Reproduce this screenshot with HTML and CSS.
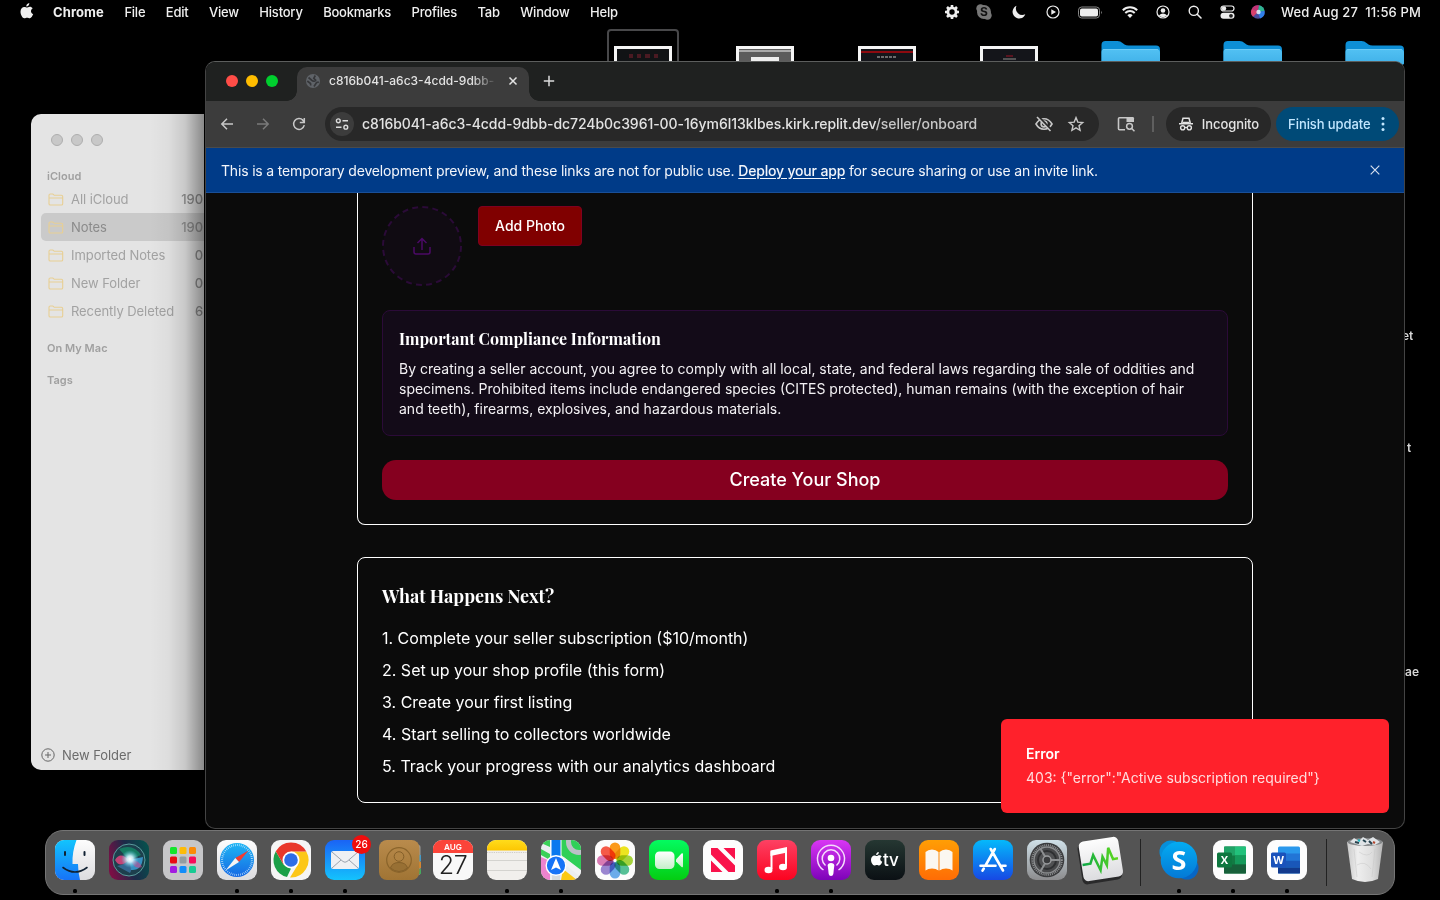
FILE: index.html
```html
<!DOCTYPE html>
<html lang="en">
<head>
<meta charset="utf-8">
<title>Desktop</title>
<link rel="stylesheet" href="styles.css">
</head>
<body>
<div class="desktop">

  <!-- shared gradients -->
  <svg class="defs" width="0" height="0" aria-hidden="true">
    <defs>
      <linearGradient id="gFold" x2="0" y2="1"><stop offset="0" stop-color="#52c1f3"/><stop offset="1" stop-color="#3fb0e8"/></linearGradient>
      <linearGradient id="gWhite" x2="0" y2="1"><stop offset="0" stop-color="#fdfdfd"/><stop offset="1" stop-color="#dcdcdf"/></linearGradient>
      <linearGradient id="gFinder" x2="0" y2="1"><stop offset="0" stop-color="#12c4fd"/><stop offset="1" stop-color="#1673f8"/></linearGradient>
      <linearGradient id="gSiri" x1="0" y1="0.6" x2="1" y2="0.3"><stop offset="0" stop-color="#7a0f45"/><stop offset=".5" stop-color="#1c2a48"/><stop offset="1" stop-color="#07504d"/></linearGradient>
      <linearGradient id="gSaf" x2="0" y2="1"><stop offset="0" stop-color="#1fb6f4"/><stop offset="1" stop-color="#1568e4"/></linearGradient>
      <linearGradient id="gMail" x2="0" y2="1"><stop offset="0" stop-color="#1a63f5"/><stop offset="1" stop-color="#14c3fd"/></linearGradient>
      <linearGradient id="gBrown" x2="0" y2="1"><stop offset="0" stop-color="#b98b4c"/><stop offset="1" stop-color="#a07434"/></linearGradient>
      <linearGradient id="gYel" x2="0" y2="1"><stop offset="0" stop-color="#ffdc1c"/><stop offset="1" stop-color="#fcc602"/></linearGradient>
      <linearGradient id="gGreen" x2="0" y2="1"><stop offset="0" stop-color="#04fb60"/><stop offset="1" stop-color="#04cd12"/></linearGradient>
      <linearGradient id="gCam" x2="0" y2="1"><stop offset="0" stop-color="#fff"/><stop offset="1" stop-color="#c4efc9"/></linearGradient>
      <linearGradient id="gMusic" x2="0" y2="1"><stop offset="0" stop-color="#fd4163"/><stop offset="1" stop-color="#fb0320"/></linearGradient>
      <linearGradient id="gPod" x2="0" y2="1"><stop offset="0" stop-color="#d936f4"/><stop offset="1" stop-color="#7d03b8"/></linearGradient>
      <linearGradient id="gTv" x2="0" y2="1"><stop offset="0" stop-color="#253732"/><stop offset="1" stop-color="#0b1014"/></linearGradient>
      <linearGradient id="gBooks" x2="0" y2="1"><stop offset="0" stop-color="#ff9e05"/><stop offset="1" stop-color="#ff6c05"/></linearGradient>
      <linearGradient id="gStore" x2="0" y2="1"><stop offset="0" stop-color="#04b9fb"/><stop offset="1" stop-color="#1748e4"/></linearGradient>
      <linearGradient id="gSet" x2="0" y2="1"><stop offset="0" stop-color="#cfe0e8"/><stop offset="1" stop-color="#8c8c8e"/></linearGradient>
      <linearGradient id="gWave" gradientUnits="userSpaceOnUse" x1="0" y1="0" x2="40" y2="0"><stop offset="0" stop-color="#0aa548"/><stop offset="1" stop-color="#65dd1a"/></linearGradient>
      <linearGradient id="gSky" x2="0" y2="1"><stop offset="0" stop-color="#04acf2"/><stop offset="1" stop-color="#0479d6"/></linearGradient>
      <linearGradient id="gTrash" x2="1" y2="0"><stop offset="0" stop-color="#c9c9c9"/><stop offset=".3" stop-color="#eeeeee"/><stop offset=".7" stop-color="#dddddd"/><stop offset="1" stop-color="#b5b5b5"/></linearGradient>
      <radialGradient id="gGlow"><stop offset="0" stop-color="#fff"/><stop offset=".35" stop-color="#d5f6ff" stop-opacity=".9"/><stop offset="1" stop-color="#48c0e0" stop-opacity="0"/></radialGradient>
      <clipPath id="tile"><rect width="40" height="40" rx="9"/></clipPath>
      <symbol id="folder" viewBox="0 0 60 26"><path d="M.5 5q0-4 4-4h12q3 0 5 2l2 1.500q1.500 1 4 1H55q4 0 4 4V24H.5z" fill="#0d8fd6"/><path d="M.5 12q0-3 3-3H55q4 0 4 4v10l-1 2H.5z" fill="url(#gFold)"/><path d="M2 9.500h55" stroke="#82d4f8" stroke-width=".6"/></symbol>
      <symbol id="nfolder" viewBox="0 0 16 13"><path d="M1 10.700V2.300Q1 1 2.300 1h2.500l1.500 1.300h7Q14.700 2.300 14.700 3.600v7.100Q14.700 12 13.400 12H2.300Q1 12 1 10.700zM1 5h13.700" fill="none" stroke="#e8cf94" stroke-width="1.100"/></symbol>
      <symbol id="apple" viewBox="0 0 14 17"><path d="M9.300 0c.2 1.900-1.300 3.600-3 3.500C6.100 1.800 7.500.2 9.300 0zM6.800 4.600c.7 0 1.700-.9 3-.9 1.100 0 2.200.6 2.900 1.500-2.500 1.500-2.100 4.900.5 5.900-.6 1.700-1.900 4.200-3.400 4.200-1 0-1.500-.6-2.700-.6s-1.700.6-2.700.6C2.400 15.300.5 11.700.5 8.800c0-3 1.900-4.900 3.800-4.900 1.100 0 2 .7 2.500.7z" fill="currentColor"/></symbol>
    </defs>
  </svg>

  <header class="menubar">
    <svg class="apple" width="14" height="17"><use href="#apple"/></svg>
    <nav class="menus">
      <b>Chrome</b><span>File</span><span>Edit</span><span>View</span><span>History</span><span>Bookmarks</span><span>Profiles</span><span>Tab</span><span>Window</span><span>Help</span>
    </nav>
    <div class="status">
      <span class="w32"><svg width="16" height="16" viewBox="-8 -8 16 16"><circle r="4.100" fill="none" stroke="#eee" stroke-width="2.800"/><path d="M0-7V-5M0 7V5M7 0H5M-7 0H-5M5-5L3.500-3.500M-5-5L-3.500-3.500M5 5L3.500 3.500M-5 5L-3.500 3.500" stroke="#eee" stroke-width="2.600"/></svg></span>
      <span class="w32"><svg width="16" height="16" viewBox="0 0 16 16"><circle cx="8" cy="8" r="7" fill="#777"/><circle cx="4.500" cy="4.500" r="4.200" fill="#777"/><circle cx="11.500" cy="11.500" r="4.200" fill="#777"/><text x="8" y="12.200" text-anchor="middle" font-size="12" font-weight="700" fill="#111">S</text></svg></span>
      <span class="w38"><svg width="14" height="14" viewBox="0 0 14 14"><path d="M4.500.8A6.600 6.600 0 1 0 13.300 9.300 6.500 6.500 0 0 1 4.500.8z" fill="#eee"/></svg></span>
      <span class="w30"><svg width="14" height="14" viewBox="0 0 14 14"><circle cx="7" cy="7" r="6" fill="none" stroke="#eee" stroke-width="1.200"/><path d="M5.300 4.200v5.600L10 7z" fill="#eee"/></svg></span>
      <span class="w44"><svg width="26" height="13" viewBox="0 0 26 13"><rect x="1.500" y="1" width="21" height="11" rx="3.200" fill="none" stroke="#888" stroke-width="1"/><rect x="3" y="2.500" width="18" height="8" rx="1.800" fill="#eee"/><path d="M24 4.800q1.600 1.700 0 3.400z" fill="#999"/></svg></span>
      <span class="w36"><svg width="18" height="14" viewBox="0 0 18 14"><path d="M1.800 5.200a10.300 10.300 0 0 1 14.400 0M4.300 8a6.800 6.800 0 0 1 9.400 0" fill="none" stroke="#eee" stroke-width="2"/><path d="M6.400 10.300a3.800 3.800 0 0 1 5.200 0L9 13z" fill="#eee"/></svg></span>
      <span class="w30"><svg width="14" height="14" viewBox="0 0 14 14"><circle cx="7" cy="7" r="6" fill="none" stroke="#eee" stroke-width="1.200"/><circle cx="7" cy="5.500" r="2.300" fill="#eee"/><path d="M2.800 10.600q4.200-4.300 8.400 0Q7 14 2.800 10.600z" fill="#eee"/></svg></span>
      <span class="w34"><svg width="14" height="14" viewBox="0 0 14 14"><circle cx="5.800" cy="5.800" r="4.600" fill="none" stroke="#eee" stroke-width="1.400"/><path d="M9.200 9.200l3.800 3.800" stroke="#eee" stroke-width="1.600" stroke-linecap="round"/></svg></span>
      <span class="w30"><svg width="15" height="14" viewBox="0 0 15 14"><rect x="1" y="1" width="13" height="5" rx="2.500" fill="none" stroke="#eee" stroke-width="1.200"/><circle cx="4" cy="3.500" r="2.200" fill="#eee"/><rect x=".5" y="7.800" width="14" height="6" rx="3" fill="#eee"/><circle cx="11" cy="10.800" r="1.900" fill="#222"/></svg></span>
      <span class="w32"><svg width="14" height="14" viewBox="0 0 14 14"><circle cx="7" cy="7" r="6.800" fill="#4b4a9c"/><path d="M7 7L1 3.500A7 7 0 0 1 8 .3z" fill="#c43374"/><path d="M7 7L8 .3A7 7 0 0 1 13.500 6z" fill="#2fb58f"/><path d="M7 7l6.500-1A7 7 0 0 1 9 13.500z" fill="#2f7fe8"/><path d="M7 7L1 3.500A7 7 0 0 0 2 11.800z" fill="#d83f6c"/><circle cx="7.500" cy="7" r="2.200" fill="#e6f5ff" opacity=".85"/></svg></span>
    </div>
    <span class="clock">Wed Aug 27&nbsp; 11:56 PM</span>
  </header>

  <!-- desktop items behind the windows -->
  <div class="pick"></div>
  <svg class="thumb t1" width="58" height="18"><rect width="58" height="18" fill="#f5f5f5"/><rect x="3" y="3" width="52" height="15" fill="#111315"/><path d="M15 10h4M23 10h4M31 10h5M40 10h4" stroke="#4a1a22" stroke-width="4"/></svg>
  <svg class="thumb t2" width="58" height="18"><rect width="58" height="18" fill="#f5f5f5"/><rect x="3" y="3" width="52" height="15" fill="#5c5c5c"/><path d="M3 5h52" stroke="#aaa" stroke-width="2"/><rect x="15" y="11" width="28" height="7" fill="#eee"/></svg>
  <svg class="thumb t3" width="58" height="18"><rect width="58" height="18" fill="#f5f5f5"/><rect x="3" y="3" width="52" height="15" fill="#14151a"/><path d="M3 6h52" stroke="#8d0a10" stroke-width="2"/><path d="M19 11h20" stroke="#888" stroke-width="1.500" stroke-dasharray="3 1"/></svg>
  <svg class="thumb t4" width="58" height="18"><rect width="58" height="18" fill="#f5f5f5"/><rect x="3" y="3" width="52" height="15" fill="#14151a"/><path d="M26 10h7" stroke="#701522" stroke-width="1.500"/><path d="M23 13h13" stroke="#666" stroke-width="1.500"/></svg>
  <svg class="dfolder f1" width="60" height="26"><use href="#folder"/></svg>
  <svg class="dfolder f2" width="60" height="26"><use href="#folder"/></svg>
  <svg class="dfolder f3" width="60" height="26"><use href="#folder"/></svg>
  <span class="lbl l1">et</span><span class="lbl l2">t</span><span class="lbl l3">ae</span>

  <aside class="notes">
    <div class="dots"><i></i><i></i><i></i></div>
    <div class="nhead">iCloud</div>
    <div class="nrow"><svg width="16" height="13"><use href="#nfolder"/></svg><span>All iCloud</span><em>190</em></div>
    <div class="nrow sel"><svg width="16" height="13"><use href="#nfolder"/></svg><span>Notes</span><em>190</em></div>
    <div class="nrow"><svg width="16" height="13"><use href="#nfolder"/></svg><span>Imported Notes</span><em>0</em></div>
    <div class="nrow"><svg width="16" height="13"><use href="#nfolder"/></svg><span>New Folder</span><em>0</em></div>
    <div class="nrow"><svg width="16" height="13"><use href="#nfolder"/></svg><span>Recently Deleted</span><em>6</em></div>
    <div class="nhead mac">On My Mac</div>
    <div class="nhead tags">Tags</div>
    <div class="nfoot"><svg width="14" height="14" viewBox="0 0 14 14"><circle cx="7" cy="7" r="6.200" fill="none" stroke="#666"/><path d="M7 4v6M4 7h6" stroke="#666"/></svg><span>New Folder</span></div>
  </aside>

  <main class="chrome">
    <div class="tabstrip">
      <div class="lights"><i class="r"></i><i class="y"></i><i class="g"></i></div>
      <div class="tab">
        <svg width="14" height="14" viewBox="0 0 14 14"><circle cx="7" cy="7" r="7" fill="#5f6368"/><path d="M1.300 7L4.500 9.500l.2 2M2.500 3.500L6 6.500q2.800 1.600 3.700-.3L7.800 4.300 9.300 1.500M8 12.500l2.600-4 2.200-.4" fill="none" stroke="#36373a" stroke-width="1.700"/></svg>
        <span class="ttl">c816b041-a6c3-4cdd-9dbb-</span>
        <svg class="tx" width="10" height="10" viewBox="0 0 10 10"><path d="M1.500 1.500l7 7M8.500 1.500l-7 7" stroke="#e3e3e3" stroke-width="1.500"/></svg>
      </div>
      <svg class="plus" width="12" height="12" viewBox="0 0 12 12"><path d="M6 .8v10.400M.8 6h10.400" stroke="#dcdcdc" stroke-width="1.500"/></svg>
    </div>
    <div class="toolbar">
      <span class="nav"><svg width="14" height="14" viewBox="0 0 14 14"><path d="M13 7H2M7 1.800L1.800 7 7 12.200" fill="none" stroke="#c7c7c7" stroke-width="1.500"/></svg></span>
      <span class="nav"><svg width="14" height="14" viewBox="0 0 14 14"><path d="M1 7h11M7 1.800L12.200 7 7 12.200" fill="none" stroke="#7a7a7a" stroke-width="1.500"/></svg></span>
      <span class="nav"><svg width="14" height="14" viewBox="0 0 14 14"><path d="M12.300 8.200A5.400 5.400 0 1 1 11 3.300M12.300 1v4.500H7.800M12.300 5L10 2.400" fill="none" stroke="#c7c7c7" stroke-width="1.500"/></svg></span>
      <div class="omni">
        <span class="site"><svg width="14" height="12" viewBox="0 0 14 12"><circle cx="3.300" cy="2.800" r="1.900" fill="none" stroke="#ddd" stroke-width="1.400"/><path d="M7.500 2.800H13M1 9.200h5.500" stroke="#ddd" stroke-width="1.500"/><circle cx="10.800" cy="9.200" r="1.900" fill="none" stroke="#ddd" stroke-width="1.400"/></svg></span>
        <span class="url">c816b041-a6c3-4cdd-9dbb-dc724b0c3961-00-16ym6l13klbes.kirk.replit.dev<s>/seller/onboard</s></span>
        <svg class="eye" width="18" height="16" viewBox="0 0 18 16"><path d="M1 8q3-5.300 8-5.300T17 8q-3 5.300-8 5.300T1 8z" fill="none" stroke="#c7c7c7" stroke-width="1.600"/><circle cx="9" cy="8" r="2.900" fill="none" stroke="#c7c7c7" stroke-width="1.600"/><path d="M3.500.8l13.500 13.700" stroke="#282828" stroke-width="2.200"/><path d="M2 1l13.500 14" stroke="#c7c7c7" stroke-width="1.600"/></svg>
        <svg class="star" width="16" height="16" viewBox="0 0 16 16"><path d="M8 1.600l1.800 4.500 4.900.4-3.700 3.200 1.100 4.700L8 11.900l-4.100 2.500L5 9.700 1.300 6.500l4.900-.4z" fill="none" stroke="#c7c7c7" stroke-width="1.400"/></svg>
      </div>
      <svg class="lens" width="18" height="16" viewBox="0 0 18 16"><path d="M8 13.800H2.500q-1 0-1-1V2.700q0-1 1-1H10" fill="none" stroke="#c7c7c7" stroke-width="1.600"/><path d="M9.500 1h6.200q1.300 0 1.300 1.300V6H9.500z" fill="#c7c7c7"/><circle cx="12.500" cy="10.300" r="2.900" fill="none" stroke="#c7c7c7" stroke-width="1.500"/><path d="M14.500 12.300l3 3" stroke="#c7c7c7" stroke-width="1.500"/></svg>
      <i class="bar"></i>
      <div class="pill"><svg width="16" height="16" viewBox="0 0 16 16"><path d="M1 7.700h14M3.700 7L5 2.300h6L12.300 7" fill="none" stroke="#e3e3e3" stroke-width="1.500"/><path d="M4.500 5.800h7v2h-7z" fill="#e3e3e3"/><circle cx="4.700" cy="11.800" r="2.100" fill="none" stroke="#e3e3e3" stroke-width="1.400"/><circle cx="11.300" cy="11.800" r="2.100" fill="none" stroke="#e3e3e3" stroke-width="1.400"/><path d="M6.800 11.500h2.400" stroke="#e3e3e3" stroke-width="1.200"/></svg><span>Incognito</span></div>
      <div class="pill upd"><span>Finish update</span><svg width="4" height="16" viewBox="0 0 4 16"><circle cx="2" cy="2.500" r="1.500" fill="#c2e7ff"/><circle cx="2" cy="8" r="1.500" fill="#c2e7ff"/><circle cx="2" cy="13.500" r="1.500" fill="#c2e7ff"/></svg></div>
    </div>
    <div class="banner">
      <span>This is a temporary development preview, and these links are not for public use. <u>Deploy your app</u> for secure sharing or use an invite link.</span>
      <svg width="10" height="10" viewBox="0 0 10 10"><path d="M.7.7l8.600 8.600M9.300.7L.7 9.300" stroke="#d4deee" stroke-width="1.200"/></svg>
    </div>
    <div class="page">
      <section class="card first">
        <div class="photo">
          <svg width="80" height="80" viewBox="0 0 80 80"><circle cx="40" cy="40" r="39" fill="#100b12" stroke="#2b0b38" stroke-width="2" stroke-dasharray="6 4.210"/><path d="M32 41v5q0 2 2 2h12q2 0 2-2v-5M35.500 37L40 32.500l4.500 4.500M40 33v11" fill="none" stroke="#4b0a66" stroke-width="1.500"/></svg>
          <button class="add">Add Photo</button>
        </div>
        <div class="info">
          <h3>Important Compliance Information</h3>
          <p>By creating a seller account, you agree to comply with all local, state, and federal laws regarding the sale of oddities and<br>specimens. Prohibited items include endangered species (CITES protected), human remains (with the exception of hair<br>and teeth), firearms, explosives, and hazardous materials.</p>
        </div>
        <button class="create">Create Your Shop</button>
      </section>
      <section class="card next">
        <h2>What Happens Next?</h2>
        <div class="steps">
          <p>1. Complete your seller subscription ($10/month)</p>
          <p>2. Set up your shop profile (this form)</p>
          <p>3. Create your first listing</p>
          <p>4. Start selling to collectors worldwide</p>
          <p>5. Track your progress with our analytics dashboard</p>
        </div>
      </section>
    </div>
    <div class="toast"><b>Error</b><span>403: {"error":"Active subscription required"}</span></div>
  </main>

  <footer class="dock">
    <div class="app on"><svg viewBox="0 0 40 40"><g clip-path="url(#tile)"><rect width="40" height="40" fill="url(#gWhite)"/><path d="M0 0h21.500Q17 12 17.500 24H23q0 8 2 16H0z" fill="url(#gFinder)"/></g><path d="M10 12v3M29.500 12v3" stroke="#123" stroke-width="2" stroke-linecap="round"/><path d="M8 27.500q12 9 24 0" fill="none" stroke="#123" stroke-width="1.600" stroke-linecap="round"/></svg></div>
    <div class="app"><svg viewBox="0 0 40 40"><rect width="40" height="40" rx="9" fill="url(#gSiri)"/><circle cx="20" cy="20" r="16" fill="#1d3f4d" stroke="#5a9c9c"/><path d="M6 20q5-9 14 0-9 9-14 0z" fill="#e0447e" opacity=".85"/><path d="M10 9q14-6 22 6l-12 5z" fill="#148a68" opacity=".8"/><path d="M20 20l14-3q-1 14-12 13z" fill="#3fa5df" opacity=".8"/><path d="M8 26q9-2 12-6 4 9 1 13z" fill="#3f7aae" opacity=".7"/><path d="M22 20q8 0 11 7-8 3-11-7z" fill="#c84a90" opacity=".6"/><circle cx="21" cy="19" r="9" fill="url(#gGlow)"/></svg></div>
    <div class="app"><svg viewBox="0 0 40 40"><rect width="40" height="40" rx="9" fill="#c6c6c8"/><g><rect x="7" y="7" width="7" height="7" rx="1.500" fill="#13e52b"/><rect x="16.500" y="7" width="7" height="7" rx="1.500" fill="#fdbb08"/><rect x="26" y="7" width="7" height="7" rx="1.500" fill="#fb8a07"/><rect x="7" y="16.500" width="7" height="7" rx="1.500" fill="#e90b13"/><rect x="16.500" y="16.500" width="7" height="7" rx="1.500" fill="#939da1"/><rect x="26" y="16.500" width="7" height="7" rx="1.500" fill="#f70b5a"/><rect x="7" y="26" width="7" height="7" rx="1.500" fill="#a21be0"/><rect x="16.500" y="26" width="7" height="7" rx="1.500" fill="#128df9"/><rect x="26" y="26" width="7" height="7" rx="1.500" fill="#17cb93"/></g></svg></div>
    <div class="app on"><svg viewBox="0 0 40 40"><rect width="40" height="40" rx="9" fill="url(#gWhite)"/><circle cx="20" cy="20" r="17" fill="url(#gSaf)"/><circle cx="20" cy="20" r="14.900" fill="none" stroke="#d6efff" stroke-width="2" stroke-dasharray=".6 1.340"/><path d="M31.500 10.500L22 22 18.300 18z" fill="#f33b30"/><path d="M8.500 30.500L18.300 18l3.700 4z" fill="#f4f4f4"/></svg></div>
    <div class="app on"><svg viewBox="0 0 40 40"><rect width="40" height="40" rx="9" fill="#f5f5f5"/><path d="M4.800 11.300L12.500 24.500 20 28.500l-4 8.600A17.500 17.500 0 0 1 4.800 11.300z" fill="#1ba048"/><path d="M20 11.500h15.300A17.500 17.500 0 0 1 19 37.500l8-13z" fill="#fcc718"/><path d="M4.800 11.300A17.500 17.500 0 0 1 35.300 11.500H20L12.500 24.500z" fill="#e9382b"/><circle cx="20" cy="20" r="8.500" fill="#fff"/><circle cx="20" cy="20" r="6.800" fill="#2e6de6"/></svg></div>
    <div class="app on"><svg viewBox="0 0 40 40"><rect width="40" height="40" rx="9" fill="url(#gMail)"/><rect x="6" y="11" width="28" height="18" rx="2.500" fill="#eef0f3"/><path d="M7 12l11 9.500q2 1.500 4 0L33 12M7 28l9-8M33 28l-9-8" fill="none" stroke="#9aa3ae" stroke-width="1"/></svg><span class="badge">26</span></div>
    <div class="app"><svg viewBox="0 0 40 40"><path d="M37 5h2.500q2 0 2 2v26q0 2-2 2H37z" fill="#9a9a98"/><path d="M40 15h1.800v6H40z" fill="#38a4dc"/><path d="M40 22h1.800v6H40z" fill="#ec8b20"/><path d="M40 29h1.800v5H40z" fill="#3cb559"/><rect width="40.500" height="40" rx="8" fill="url(#gBrown)"/><circle cx="20" cy="20" r="12.300" fill="none" stroke="#8a642b" stroke-width="1.200"/><circle cx="20" cy="16.500" r="4.800" fill="#b08343" stroke="#845f29"/><path d="M11.500 28Q13 22.500 20 22.500T28.500 28Q20 35 11.500 28z" fill="#987034" stroke="#845f29"/></svg></div>
    <div class="app"><svg viewBox="0 0 40 40"><g clip-path="url(#tile)"><rect width="40" height="40" fill="#f8f8f8"/><rect width="40" height="13" fill="#fb4439"/></g><text x="20" y="9.800" text-anchor="middle" font-size="8.200" font-weight="600" fill="#fff">AUG</text><text x="20" y="34.300" text-anchor="middle" font-size="25" font-weight="300" letter-spacing="-.4" fill="#222">27</text></svg></div>
    <div class="app on"><svg viewBox="0 0 40 40"><g clip-path="url(#tile)"><rect width="40" height="40" fill="#f1efec"/><rect width="40" height="10.500" fill="url(#gYel)"/><path d="M0 12.500h40" stroke="#b4b2ae" stroke-width=".7" stroke-dasharray=".8 1"/><path d="M0 20.500h40M0 30.500h40" stroke="#cdcbc8" stroke-width=".8"/></g></svg></div>
    <div class="app on"><svg viewBox="0 0 40 40"><g clip-path="url(#tile)"><rect width="40" height="40" fill="#eceef0"/><path d="M20 0h20v30L20 15z" fill="#2fd058"/><path d="M0 9l9 5v6L0 15zM0 0h9v7L0 3z" fill="#3bd158"/><path d="M0 17l9 4v19H0z" fill="#ee83cf"/><path d="M22 29l14 11H20z" fill="#fcc914"/><path d="M21 19l19 15" stroke="#f2f3f4" stroke-width="5"/><circle cx="38" cy="2" r="10.500" fill="none" stroke="#bbc0c7" stroke-width="5"/><path d="M15 0v20" stroke="#fff" stroke-width="11"/><path d="M15 0v20" stroke="#0a78ef" stroke-width="9"/><path d="M15 30v10" stroke="#d5dade" stroke-width="8"/></g><circle cx="15" cy="25.500" r="9.800" fill="#1673f7" stroke="#fff" stroke-width="1.400"/><path d="M15 18l5 12-5-2.600L10 30z" fill="#fff"/></svg></div>
    <div class="app"><svg viewBox="0 0 40 40"><rect width="40" height="40" rx="9" fill="#fcfcfc"/><g class="petals" transform="translate(20 20.500)"><rect x="-5.300" y="-18" width="10.600" height="16.500" rx="5.300" fill="#fb9a1c"/><rect x="-5.300" y="-18" width="10.600" height="16.500" rx="5.300" fill="#ece420" transform="rotate(45)"/><rect x="-5.300" y="-18" width="10.600" height="16.500" rx="5.300" fill="#a5d33c" transform="rotate(90)"/><rect x="-5.300" y="-18" width="10.600" height="16.500" rx="5.300" fill="#56c096" transform="rotate(135)"/><rect x="-5.300" y="-18" width="10.600" height="16.500" rx="5.300" fill="#6bacea" transform="rotate(180)"/><rect x="-5.300" y="-18" width="10.600" height="16.500" rx="5.300" fill="#9a86d0" transform="rotate(225)"/><rect x="-5.300" y="-18" width="10.600" height="16.500" rx="5.300" fill="#d97bb4" transform="rotate(270)"/><rect x="-5.300" y="-18" width="10.600" height="16.500" rx="5.300" fill="#f55a48" transform="rotate(315)"/></g></svg></div>
    <div class="app"><svg viewBox="0 0 40 40"><rect width="40" height="40" rx="9" fill="url(#gGreen)"/><rect x="6" y="11.500" width="19.500" height="17.500" rx="4.500" fill="url(#gCam)"/><path d="M27 19.500l5.500-6q1.500-1 1.500.8v12q0 1.700-1.500.7L27 21.500z" fill="url(#gCam)"/></svg></div>
    <div class="app"><svg viewBox="0 0 40 40"><rect width="40" height="40" rx="9" fill="#fdfdfd"/><path d="M8 8h6.500L32 25.500V32h-6.500L8 14.500zM20.500 8H32v11.500zM8 20.500L19.500 32H8z" fill="#f9124b"/></svg></div>
    <div class="app on"><svg viewBox="0 0 40 40"><rect width="40" height="40" rx="9" fill="url(#gMusic)"/><path d="M14.500 29V12L29 9v17" fill="none" stroke="#fff" stroke-width="2"/><path d="M13.500 10.500L30 7v5.500L13.500 16z" fill="#fff"/><ellipse cx="11.500" cy="30" rx="4" ry="3.300" fill="#fff"/><ellipse cx="26" cy="27" rx="4" ry="3.300" fill="#fff"/></svg></div>
    <div class="app on"><svg viewBox="0 0 40 40"><rect width="40" height="40" rx="9" fill="url(#gPod)"/><path d="M12.500 30A13.500 13.500 0 1 1 27.500 30M14.500 25.500A8.800 8.800 0 1 1 25.500 25.500" fill="none" stroke="#f5dcfb" stroke-width="1.500"/><circle cx="20" cy="18" r="3.300" fill="#fff"/><path d="M16.700 25.500q0-2.500 3.300-2.500t3.300 2.500l-1 8.500q-.3 2-2.300 2t-2.300-2z" fill="#fff"/></svg></div>
    <div class="app"><svg viewBox="0 0 40 40"><rect width="40" height="40" rx="9" fill="url(#gTv)"/><svg x="5.500" y="12" width="12.500" height="15" color="#fff"><use href="#apple"/></svg><text x="18" y="26.200" font-size="17" font-weight="500" fill="#fff" letter-spacing="-.2">tv</text></svg></div>
    <div class="app"><svg viewBox="0 0 40 40"><rect width="40" height="40" rx="9" fill="url(#gBooks)"/><path d="M19.500 12Q17 9.500 13 9.500T6.500 12v18.500q2.500-2 6.500-2t6.500 2zM20.500 12Q23 9.500 27 9.500T33.500 12v18.500q-2.500-2-6.500-2t-6.500 2z" fill="#fbf7f1"/></svg></div>
    <div class="app"><svg viewBox="0 0 40 40"><rect width="40" height="40" rx="9" fill="url(#gStore)"/><path d="M21.800 9L12.500 25.500M10.800 28.500L9.500 30.700M17.700 9L30 30.500M7.500 25.700h15M27.500 25.700h5" fill="none" stroke="#fff" stroke-width="2.600" stroke-linecap="round"/></svg></div>
    <div class="app"><svg viewBox="0 0 40 40"><rect width="40" height="40" rx="9" fill="url(#gSet)"/><circle cx="20" cy="20" r="17.300" fill="#3b3c3e"/><circle cx="20" cy="20" r="14.800" fill="none" stroke="#8f9193" stroke-width="2" stroke-dasharray="1 .9"/><circle cx="20" cy="20" r="13" fill="#48494b" stroke="#8b8d8f" stroke-width="1.400"/><circle cx="20" cy="20" r="9" fill="#505153" stroke="#2e2f31" stroke-width="2"/><path d="M20 20h13M20 20l-6.500-11.200M20 20l-6.500 11.200" stroke="#8d8f91" stroke-width="2"/><circle cx="20" cy="20" r="4" fill="#3a3b3d" stroke="#999b9d" stroke-width="1.500"/></svg></div>
    <div class="app"><svg viewBox="0 0 40 40"><g transform="rotate(-9 20 20)"><rect x="-1.500" y="1" width="40" height="41" rx="5" fill="#29292a"/><rect x="0" y="-1" width="40" height="40" rx="5" fill="url(#gWhite)"/><path d="M1 22h8l4-8 5 16 4-13 3 9 4-17 3 12h5" fill="none" stroke="url(#gWave)" stroke-width="2.500"/></g></svg></div>
    <i class="sep"></i>
    <div class="app on"><svg viewBox="0 0 40 40"><circle cx="12" cy="12" r="11.500" fill="#078fda"/><circle cx="28" cy="28" r="11.500" fill="#0766c5"/><circle cx="20" cy="20" r="18.300" fill="url(#gSky)"/><text x="20" y="30" text-anchor="middle" font-size="27" font-weight="700" fill="#fff" font-family="Open Sans, sans-serif">S</text></svg></div>
    <div class="app on"><svg viewBox="0 0 40 40"><rect width="40" height="40" rx="9" fill="#fdfdfd"/><rect x="11" y="6.500" width="22" height="27" rx="1.500" fill="#127a43"/><path d="M11 6.500h11v9H11z" fill="#1fa366"/><path d="M22 6.500h11v9H22z" fill="#22c17b"/><path d="M22 15.500h11v9H22z" fill="#159a5b"/><path d="M11 24.500h22v9H11z" fill="#17603a"/><rect x="4" y="12.500" width="15" height="15" rx="1.500" fill="#0e773f"/><text x="11.500" y="24" text-anchor="middle" font-size="11" font-weight="700" fill="#fff" font-family="Open Sans, sans-serif">X</text></svg></div>
    <div class="app on"><svg viewBox="0 0 40 40"><rect width="40" height="40" rx="9" fill="#fdfdfd"/><rect x="11" y="6.500" width="22" height="27" rx="1.500" fill="#2a98ec"/><path d="M11 13.500h22v7H11z" fill="#2275d6"/><path d="M11 20.500h22v7H11z" fill="#1957b9"/><path d="M11 27.500h22v6H11z" fill="#123a8d"/><rect x="4" y="12.500" width="15" height="15" rx="1.500" fill="#1a52bb"/><text x="11.500" y="24" text-anchor="middle" font-size="11" font-weight="700" fill="#fff" font-family="Open Sans, sans-serif">W</text></svg></div>
    <i class="sep"></i>
    <div class="app"><svg viewBox="0 0 40 40"><path d="M2 2q18-6 36 0l-5 37q-13 6-26 0z" fill="url(#gTrash)"/><ellipse cx="20" cy="2" rx="17.500" ry="4" fill="#85888a"/><path d="M5 2l4-4 5 3 4-4 5 3 5-3 7 5-5 3-7-1-6 2-6-2z" fill="#dfe3e6"/><path d="M10 2l4 1M24 1l3 3M18 0l3 2" stroke="#26434f" stroke-width="2"/><path d="M13 0l2 1" stroke="#19b5c2" stroke-width="2"/><path d="M28 2l2 1" stroke="#b5462c" stroke-width="2"/><path d="M9 9l3 28M30 9l-3 28M14 12q9 6 13 0M12 25q8-5 14 4" stroke="#c4c4c4" stroke-width=".9" fill="none" opacity=".5"/></svg></div>
  </footer>
</div>
</body>
</html>
```
FILE: styles.css
```css
* { box-sizing: border-box; }
body { margin: 0; background: #000; font-family: Inter, "Liberation Sans", sans-serif; }
.desktop { position: relative; width: 1440px; height: 900px; overflow: hidden; background: #000; }
.defs { position: absolute; }
svg { flex: none; display: block; overflow: visible; }

.menubar { display: flex; align-items: center; height: 24px; padding-left: 20px; color: #efefef; font-size: 13px; font-weight: 500; white-space: nowrap; }
.apple { margin-top: -2px; }
.menus { display: flex; gap: 20.5px; margin-left: 19px; width: 883px; padding-bottom: 1px; letter-spacing: -.22px; }
.menus b { letter-spacing: .1px; }
.status { display: flex; }
.status span { display: flex; justify-content: center; align-items: center; }
.w30 { width: 30px; } .w32 { width: 32px; } .w34 { width: 34px; } .w36 { width: 36px; } .w38 { width: 38px; } .w44 { width: 44px; }
.clock { margin-left: 7px; padding-bottom: 1px; letter-spacing: .15px; }

.pick { position: absolute; left: 607px; top: 29px; width: 72px; height: 60px; border: 2px solid #48484a; border-radius: 4px; }
.thumb { position: absolute; top: 46px; }
.t1 { left: 614px; } .t2 { left: 736px; } .t3 { left: 858px; } .t4 { left: 980px; }
.dfolder { position: absolute; top: 40px; }
.f1 { left: 1101px; } .f2 { left: 1223px; } .f3 { left: 1345px; }
.lbl { position: absolute; font-size: 12px; font-weight: 600; color: #d5d5d5; line-height: 16px; }
.l1 { left: 1402px; top: 328px; } .l2 { left: 1407px; top: 440px; } .l3 { left: 1405px; top: 664px; }

.notes { position: absolute; left: 31px; top: 114px; width: 173px; height: 656px; background: #e4e4e4; border-radius: 10px 0 0 10px; overflow: hidden; display: flex; flex-direction: column; }
.notes::after { content: ""; position: absolute; inset: 0 0 0 auto; width: 54px; background: linear-gradient(90deg, transparent, rgba(0,0,0,.03) 35%, rgba(0,0,0,.12) 65%, rgba(0,0,0,.4)); }
.dots { display: flex; gap: 8px; padding: 20px 0 0 20px; height: 54px; }
.dots i { width: 12px; height: 12px; border-radius: 50%; background: #c8c8c8; border: 1px solid #aeaeae; }
.nhead { font-size: 11px; font-weight: 600; color: #a0a0a0; height: 17px; line-height: 16px; padding-left: 16px; letter-spacing: .03px; }
.mac { margin-top: 15px; } .tags { margin-top: 15px; }
.nrow { display: flex; align-items: center; height: 28px; margin-left: 10px; padding: 0 1px 0 7px; font-size: 13px; color: #a2a2a2; border-radius: 5px 0 0 5px; letter-spacing: -.07px; }
.nrow span { margin-left: 7px; flex: 1; white-space: nowrap; }
.nrow em { font-style: normal; color: #8e8e8e; font-weight: 500; }
.sel { background: #cacaca; color: #8b8b8b; }
.nfoot { display: flex; align-items: center; gap: 7px; margin-top: auto; padding: 0 0 7px 10px; font-size: 13px; color: #6b6b6b; letter-spacing: -.07px; }

.chrome { position: absolute; left: 205px; top: 61px; width: 1200px; height: 768px; border: 1px solid #444; border-top-color: #5c5e5d; border-radius: 10px; overflow: hidden; background: #0b0b0b; display: flex; flex-direction: column; }
.tabstrip { display: flex; height: 39px; background: #1f2120; flex: none; }
.lights { display: flex; gap: 8px; padding: 13px 0 0 20px; width: 91px; }
.lights i { width: 12px; height: 12px; border-radius: 50%; }
.r { background: #ff4d47; } .y { background: #ffbd00; } .g { background: #00cf2e; }
.tab { position: relative; display: flex; align-items: center; width: 232px; height: 34px; margin-top: 5px; padding: 0 11px 6px 9px; border-radius: 10px 10px 0 0; background: #3c3c3c; }
.tab::before, .tab::after { content: ""; position: absolute; bottom: 0; width: 10px; height: 10px; }
.tab::before { left: -10px; background: radial-gradient(circle at 0 0, transparent 9.5px, #3c3c3c 10px); }
.tab::after { right: -10px; background: radial-gradient(circle at 100% 0, transparent 9.5px, #3c3c3c 10px); }
.ttl { margin: -1px 0 0 9px; width: 168px; white-space: nowrap; font-size: 12px; font-weight: 500; color: #e3e3e3; -webkit-mask-image: linear-gradient(90deg, #000 85%, transparent); mask-image: linear-gradient(90deg, #000 85%, transparent); }
.tx { margin-left: 11px; }
.plus { margin: 13px 0 0 14px; }
.toolbar { display: flex; align-items: center; height: 47px; flex: none; background: #3c3c3c; border-bottom: 1px solid #4b4b4b; padding: 0 5px 0 3px; }
.nav { width: 36px; display: flex; justify-content: center; }
.omni { display: flex; align-items: center; width: 775px; height: 34px; margin-left: 8px; border-radius: 17px; background: #282828; padding: 0 15px 0 5px; }
.site { width: 24px; height: 24px; border-radius: 50%; background: #3c3c3c; display: flex; align-items: center; justify-content: center; }
.url { flex: 1; margin-left: 8px; padding-bottom: 2px; font-size: 14px; font-weight: 500; color: #e3e3e3; white-space: nowrap; letter-spacing: -.05px; }
.url s { text-decoration: none; color: #c7c7c7; }
.star { margin-left: 15px; }
.lens { margin-left: 18px; }
.bar { width: 2px; height: 16px; background: #5f5f5f; margin: 0 12px 0 17px; }
.pill { display: flex; align-items: center; justify-content: space-between; width: 105px; height: 34px; padding: 0 12px; border-radius: 17px; background: #282828; color: #e3e3e3; font-size: 13px; font-weight: 500; white-space: nowrap; letter-spacing: -.08px; }
.upd { width: 123px; margin-left: 5px; padding-right: 14px; background: #004a77; color: #c2e7ff; }
.banner { display: flex; align-items: center; justify-content: space-between; height: 45px; flex: none; background: #003b88; border-bottom: 1px solid #194f98; padding: 0 24px 0 15px; color: #f3f6fb; font-size: 14px; white-space: nowrap; letter-spacing: -.175px; }
.banner u { font-weight: 500; text-underline-offset: 2px; }
.page { width: 896px; margin: 0 auto; color: #fff; }
.card { border: 1px solid #fff; border-radius: 8px; padding: 24px; }
.first { border-top: 0; border-radius: 0 0 8px 8px; padding-top: 13px; height: 332px; }
.photo { display: flex; gap: 16px; }
button { font: inherit; color: #fff; border: 0; }
.add { width: 104px; height: 40px; padding: 0 0 1px; border: 1px solid #80001f; border-radius: 4px; background: #800000; font-size: 14px; font-weight: 500; }
.info { margin-top: 24px; height: 126px; padding: 16px; border: 1px solid #2b0b38; border-radius: 8px; background: #130b18; }
h2, h3 { margin: 0; font-family: "Playfair Display", "Liberation Serif", serif; font-weight: 700; }
h3 { font-size: 16px; line-height: 24px; }
h2 { font-size: 18px; line-height: 28px; }
p { margin: 0; }
.info p { margin-top: 8px; font-size: 14px; line-height: 20px; white-space: nowrap; color: #f3f1f4; }
.create { display: block; width: 100%; height: 40px; margin-top: 24px; padding: 0 0 2px; border-radius: 14px; background: #85001f; font-size: 18px; font-weight: 500; }
.next { margin-top: 32px; height: 246px; }
.steps { display: flex; flex-direction: column; gap: 8px; margin-top: 16px; font-size: 16px; line-height: 24px; }
.toast { position: absolute; left: 795px; top: 657px; width: 388px; height: 94px; border-radius: 6px; padding: 25px; background: #ff212b; color: #fff; display: flex; flex-direction: column; gap: 4px; font-size: 14px; line-height: 20px; }
.toast b { font-weight: 600; }
.toast span { color: #ffdcdd; }

.dock { position: absolute; left: 45px; top: 830px; width: 1350px; height: 65px; padding: 0 2px; display: flex; border: 1px solid #757575; border-radius: 18px; background: #545454; }
.app { position: relative; width: 54px; padding: 9px 7px; }
.app svg { width: 40px; height: 40px; }
.app svg svg { width: 12.5px; height: 15px; }
.petals { isolation: isolate; }
.petals rect { mix-blend-mode: multiply; }
.on::after { content: ""; position: absolute; left: 25px; bottom: 1px; width: 4px; height: 4px; border-radius: 1.5px; background: #000; }
.badge { position: absolute; left: 34px; top: 4px; width: 19px; height: 19px; border-radius: 50%; background: #f00d0d; color: #fff; font-size: 10px; font-weight: 500; line-height: 19px; text-align: center; }
.sep { width: 24px; padding: 8px 11.5px; display: flex; }
.sep::before { content: ""; width: 1px; height: 47px; background: #222; }
```
